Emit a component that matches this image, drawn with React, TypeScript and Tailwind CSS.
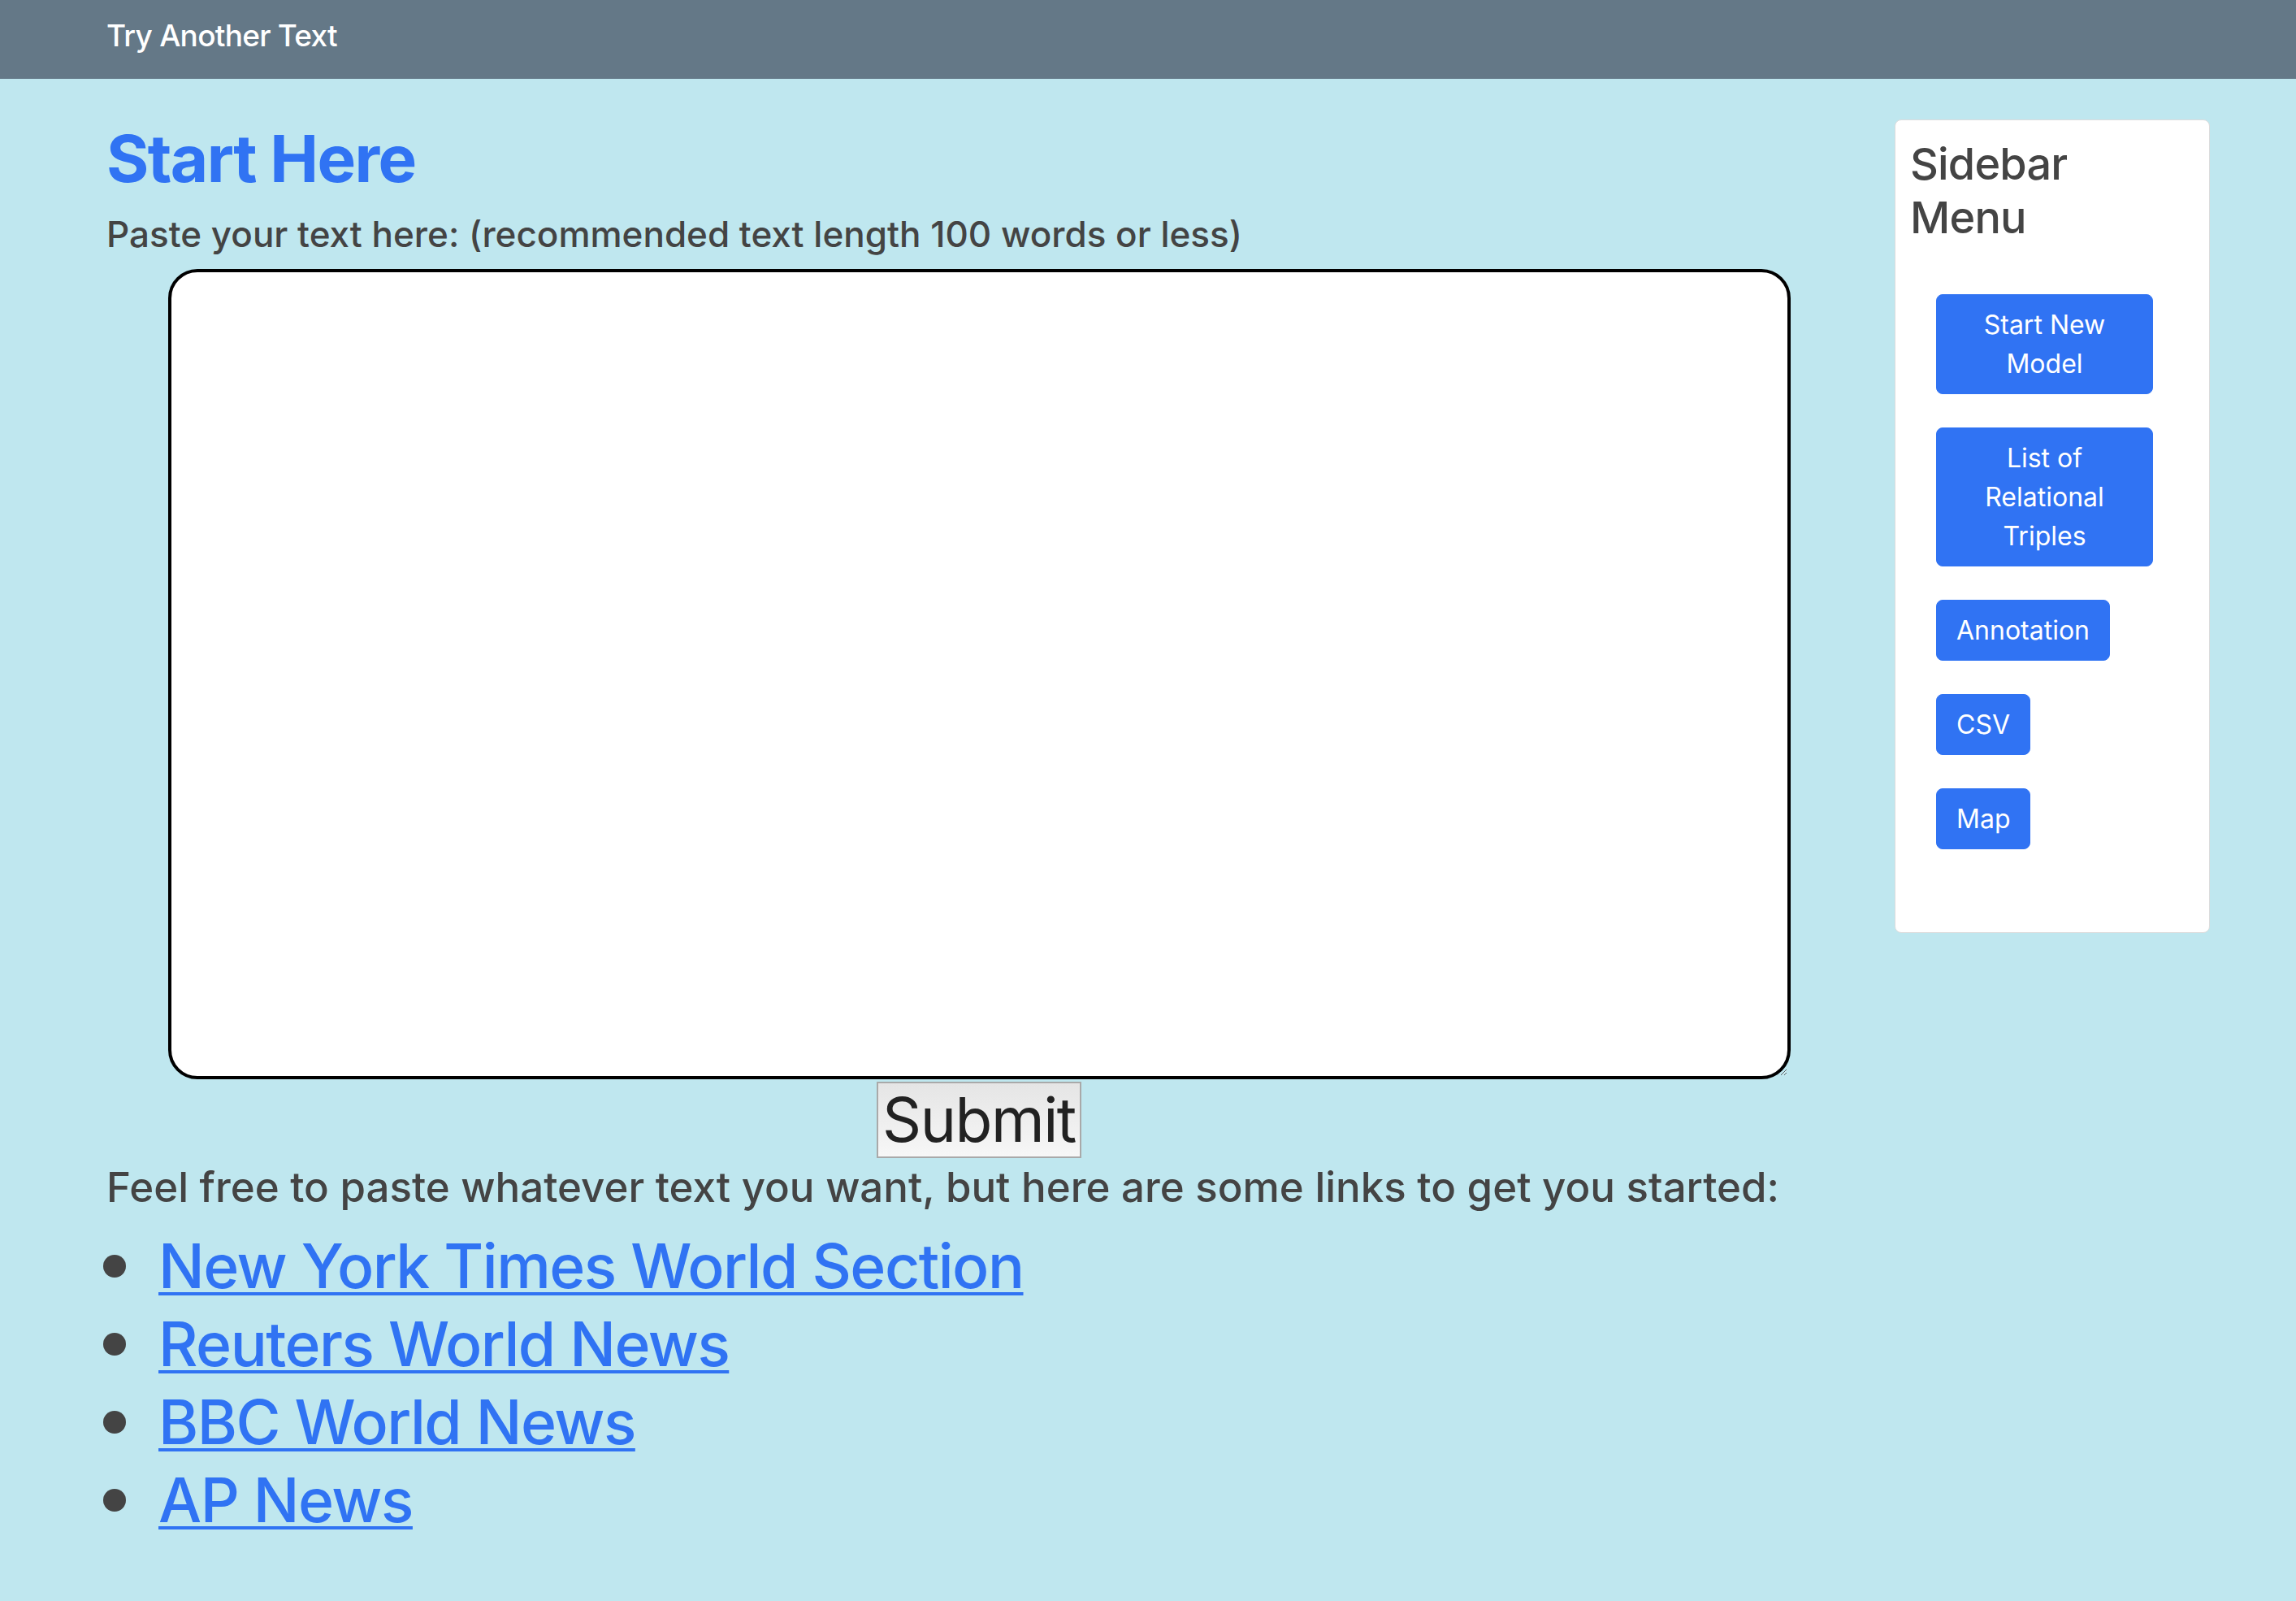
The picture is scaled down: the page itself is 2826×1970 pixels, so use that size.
import React from "react";

const menu = ["Start New Model", "List of Relational Triples", "Annotation", "CSV", "Map"];

const links = [
  "New York Times World Section",
  "Reuters World News",
  "BBC World News",
  "AP News",
];

const Navbar = () => (
  <nav className="h-[97px] bg-[#647887] flex items-center px-[131px]">
    <a href="#" className="text-[37px] font-medium text-white leading-none tracking-[-0.02em] -mt-[10px]">
      Try Another Text
    </a>
  </nav>
);

const Sidebar = () => (
  <aside className="w-[388px] h-[1001px] shrink-0 bg-white border border-[#dcdcdc] rounded-[8px] pt-[21px] px-[18px]">
    <h3 className="text-[54px] leading-[66px] font-medium text-[#444] tracking-[-0.015em]">
      Sidebar
      <br />
      Menu
    </h3>
    <div className="w-[267px] ml-[32px] mt-[61px] flex flex-col items-start gap-[41px]">
      {menu.map((label) => (
        <button
          key={label}
          className="max-w-full bg-[#3073f3] text-white text-[32px] leading-[48px] px-[24px] py-[12.5px] border border-[#3073f3] rounded-[8px] text-center"
        >
          {label}
        </button>
      ))}
    </div>
  </aside>
);

export default function App() {
  return (
    <div className="min-h-[1970px] bg-[#bfe7ef] font-['Inter',sans-serif] text-[#444]">
      <Navbar />
      <div className="flex pl-[131px] pt-[50px] gap-[53px]">
        <main className="w-[2148px] shrink-0">
          <h1 className="text-[80px] leading-[96px] font-bold text-[#3073f3] tracking-[-0.02em] mb-[12px]">
            Start Here
          </h1>
          <label className="block text-[44px] leading-[66px] font-medium">
            Paste your text here: (recommended text length 100 words or less)
          </label>
          <div className="flex flex-col items-center">
            <textarea className="block mt-[10px] w-[1997px] h-[997px] bg-white border-[4px] border-black rounded-[36px] p-[16px] text-[32px] outline-none" />
            <button className="mt-[3px] w-[252px] h-[94px] border-[2px] border-[#a9a9a9] bg-gradient-to-b from-[#e5e5e5] to-[#f7f7f7] text-[#222] text-[75px] leading-[90px] tracking-[-0.02em] flex items-center justify-center">
              Submit
            </button>
          </div>
          <p className="mt-[6px] text-[51px] leading-[60px] font-medium">
            Feel free to paste whatever text you want, but here are some links to get you started:
          </p>
          <ul className="mt-[19px]">
            {links.map((l) => (
              <li key={l} className="flex items-center">
                <span className="w-[28px] h-[28px] rounded-full bg-[#444] ml-[-4px] mr-[40px] shrink-0" />
                <a
                  href="#"
                  className="text-[75px] leading-[96px] font-medium text-[#3073f3] underline decoration-[4px] underline-offset-[5px] tracking-[-0.02em]"
                >
                  {l}
                </a>
              </li>
            ))}
          </ul>
        </main>
        <Sidebar />
      </div>
    </div>
  );
}
